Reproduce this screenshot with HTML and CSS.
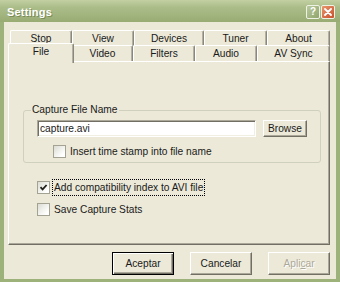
FILE: index.html
```html
<!DOCTYPE html>
<html lang="en">
<head>
    <meta charset="UTF-8">
    <meta name="viewport" content="width=device-width, initial-scale=1.0">
    <title>Settings</title>
    <link rel="stylesheet" href="styles.css">
</head>
<body>
    <div class="window">
        <div class="titlebar">
            <span class="title">Settings</span>
            <div class="caption-buttons">
                <span class="caption-btn help">?</span>
                <span class="caption-btn close">
                    <svg width="8" height="8" viewBox="0 0 8 8"><path d="M1 1L7 7M7 1L1 7" stroke="#fff" stroke-width="1.8" stroke-linecap="round"/></svg>
                </span>
            </div>
        </div>

        <div class="client">
            <div class="tabs">
                <div class="tab-row back">
                    <div class="tab">Stop</div>
                    <div class="tab">View</div>
                    <div class="tab">Devices</div>
                    <div class="tab">Tuner</div>
                    <div class="tab">About</div>
                </div>
                <div class="tab-row front">
                    <div class="tab selected">File</div>
                    <div class="tab">Video</div>
                    <div class="tab">Filters</div>
                    <div class="tab">Audio</div>
                    <div class="tab">AV Sync</div>
                </div>
            </div>

            <div class="panel">
                <fieldset class="group">
                    <legend>Capture File Name</legend>
                    <div class="file-row">
                        <input type="text" class="file-input" value="capture.avi">
                        <button class="btn browse">Browse</button>
                    </div>
                    <label class="check indent"><span class="box"></span>Insert time stamp into file name</label>
                </fieldset>

                <label class="check first">
                    <span class="box"><svg width="9" height="9" viewBox="0 0 9 9"><path d="M1.5 4.2L3.6 6.4L7.6 2" fill="none" stroke="#21201c" stroke-width="1.8"/></svg></span>
                    <span class="focus">Add compatibility index to AVI file</span>
                </label>
                <label class="check"><span class="box"></span>Save Capture Stats</label>
            </div>

            <div class="dialog-buttons">
                <button class="btn default">Aceptar</button>
                <button class="btn">Cancelar</button>
                <button class="btn disabled">Apli<u>c</u>ar</button>
            </div>
        </div>
    </div>
</body>
</html>
```

FILE: styles.css
```css
body {
    margin: 0;
    font-family: "Liberation Sans", Arial, sans-serif;
    font-size: 10.2px;
    color: #1a1a1a;
}

.window {
    width: 340px;
    height: 282px;
    display: flex;
    flex-direction: column;
    background: #9db27a;
}

.titlebar {
    height: 22px;
    flex: none;
    display: flex;
    align-items: center;
    justify-content: space-between;
    padding: 1px 5px 0 7px;
    box-sizing: border-box;
    background: linear-gradient(#c2d0a2, #aabc88 35%, #a2b47e 70%, #97ab73);
}

.title {
    color: #fff;
    font-weight: bold;
    font-size: 11px;
    letter-spacing: 0.2px;
    text-shadow: 1px 1px 0 #7b8c58;
}

.caption-buttons {
    display: flex;
    gap: 1px;
}

.caption-btn {
    width: 14px;
    height: 14px;
    box-sizing: border-box;
    border: 1px solid #eef2e4;
    border-radius: 2px;
    display: flex;
    align-items: center;
    justify-content: center;
    color: #fff;
    font-weight: bold;
    font-size: 10px;
}

.help {
    background: linear-gradient(135deg, #b9c99c, #8fa56c);
}

.close {
    background: linear-gradient(135deg, #e8956c, #c8502d);
}

.client {
    flex: 1;
    margin: 0 4px 3px;
    padding: 8px 6px 4px 4px;
    background: #ece9d8;
    display: flex;
    flex-direction: column;
}

.tabs {
    width: 320px;
    margin-left: 2px;
}

.tab-row {
    display: grid;
}

.tab-row.back {
    grid-template-columns: 62px 62px 70px 63px 63px;
    height: 15px;
}

.tab-row.front {
    grid-template-columns: 62px 61px 62px 62px 73px;
    height: 16px;
}

.tab {
    background: #ece9d8;
    border-top: 1px solid #fff;
    border-left: 1px solid #fff;
    border-right: 1px solid #8a887c;
    box-shadow: inset -1px 0 #b4b1a2;
    border-radius: 2px 2px 0 0;
    text-align: center;
    line-height: 15px;
}

.tab-row.front .tab {
    line-height: 16px;
}

.tab-row.front .tab.selected {
    position: relative;
    z-index: 1;
    margin: -2px -2px -1px;
    line-height: 16px;
}

.panel {
    height: 184px;
    box-sizing: border-box;
    border: 1px solid;
    border-color: #fff #716f64 #716f64 #fff;
    box-shadow: inset -1px -1px #aca899;
    padding: 41px 0 0 14px;
}

.group {
    width: 292px;
    box-sizing: border-box;
    margin: 0;
    padding: 3px 13px 2px;
    border: 1px solid #d0d0bf;
    border-radius: 3px;
}

.group legend {
    line-height: 14px;
    padding: 0 1px;
    margin-left: -6px;
}

.file-row {
    display: flex;
    gap: 7px;
}

.file-input {
    width: 219px;
    height: 17px;
    box-sizing: border-box;
    margin: 0;
    padding: 0 2px;
    font: inherit;
    color: inherit;
    background: #fff;
    border: 1px solid;
    border-color: #aca899 #fff #fff #aca899;
    box-shadow: inset 1px 1px #716f64, inset -1px -1px #f1efe2;
    outline: none;
}

.btn {
    width: 62px;
    height: 23px;
    box-sizing: border-box;
    margin: 0;
    padding: 0;
    font: inherit;
    color: inherit;
    background: #ece9d8;
    border: 1px solid;
    border-color: #fff #716f64 #716f64 #fff;
    box-shadow: inset -1px -1px #aca899;
}

.btn.browse {
    width: 44px;
    height: 17px;
}

.btn.default {
    border: 1px solid #000;
    box-shadow: inset 1px 1px #fff, inset -1px -1px #716f64, inset -2px -2px #aca899;
}

.btn.disabled {
    color: #aca899;
    text-shadow: 1px 1px 0 #fff;
}

.check {
    display: flex;
    align-items: center;
    gap: 4px;
    height: 17px;
    margin-left: 14px;
    margin-top: 5px;
}

.check.indent {
    margin: 6px 0 0 16px;
}

.check.first {
    margin-top: 16px;
}

.box {
    width: 13px;
    height: 13px;
    box-sizing: border-box;
    border: 1px solid #a4a293;
    background: linear-gradient(135deg, #dcdcd4, #fff 80%);
    display: flex;
    align-items: center;
    justify-content: center;
}

.focus {
    outline: 1px dotted #000;
    padding: 0 1px;
    margin-left: -1px;
    line-height: 15px;
}

.dialog-buttons {
    display: flex;
    justify-content: flex-end;
    gap: 16px;
    margin-top: 7px;
}
```
